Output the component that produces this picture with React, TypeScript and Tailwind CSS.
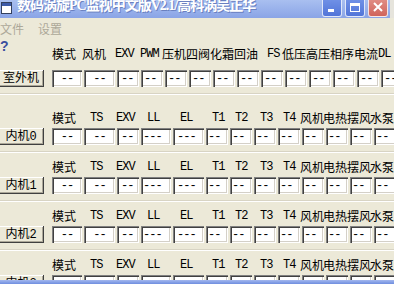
import React from 'react';

type Col = { label: string; w: string; lx: string; val: string; align: string };

const outCols: Col[] = [
  { label: '模式', w: 'w-[30px]', lx: 'ml-[0px]', val: '--', align: 'justify-center' },
  { label: '风机', w: 'w-[31px]', lx: '-ml-[2px]', val: '--', align: 'justify-center' },
  { label: 'EXV', w: 'w-[22px]', lx: '-ml-[2px]', val: '--', align: 'pl-[4px]' },
  { label: 'PWM', w: 'w-[22px]', lx: '-ml-[1px]', val: '--', align: 'pl-[3px]' },
  { label: '压机', w: 'w-[22px]', lx: '-ml-[3px]', val: '--', align: 'pl-[3px]' },
  { label: '四阀', w: 'w-[22px]', lx: '-ml-[3px]', val: '--', align: 'pl-[3px]' },
  { label: '化霜', w: 'w-[22px]', lx: '-ml-[3px]', val: '--', align: 'pl-[3px]' },
  { label: '回油', w: 'w-[22px]', lx: '-ml-[3px]', val: '--', align: 'pl-[3px]' },
  { label: 'FS', w: 'w-[22px]', lx: 'ml-[6px]', val: '--', align: 'pl-[3px]' },
  { label: '低压', w: 'w-[22px]', lx: '-ml-[3px]', val: '--', align: 'pl-[3px]' },
  { label: '高压', w: 'w-[22px]', lx: '-ml-[3px]', val: '--', align: 'pl-[3px]' },
  { label: '相序', w: 'w-[22px]', lx: '-ml-[3px]', val: '--', align: 'pl-[3px]' },
  { label: '电流', w: 'w-[22px]', lx: '-ml-[3px]', val: '--', align: 'pl-[3px]' },
  { label: 'DL', w: 'w-[22px]', lx: '-ml-[3px]', val: '--', align: 'pl-[3px]' },
];

const inCols: Col[] = [
  { label: '模式', w: 'w-[30px]', lx: 'ml-[0px]', val: '--', align: 'justify-center' },
  { label: 'TS', w: 'w-[31px]', lx: 'ml-[6px]', val: '--', align: 'justify-center' },
  { label: 'EXV', w: 'w-[22px]', lx: '-ml-[1px]', val: '--', align: 'pl-[4px]' },
  { label: 'LL', w: 'w-[30px]', lx: 'ml-[6px]', val: '---', align: 'pl-[2px]' },
  { label: 'EL', w: 'w-[31px]', lx: 'ml-[7px]', val: '---', align: 'pl-[4px]' },
  { label: 'T1', w: 'w-[22px]', lx: 'ml-[6px]', val: '--', align: 'pl-[2px]' },
  { label: 'T2', w: 'w-[22px]', lx: 'ml-[5px]', val: '--', align: 'pl-[2px]' },
  { label: 'T3', w: 'w-[22px]', lx: 'ml-[6px]', val: '--', align: 'pl-[2px]' },
  { label: 'T4', w: 'w-[22px]', lx: 'ml-[5px]', val: '--', align: 'pl-[2px]' },
  { label: '风机', w: 'w-[22px]', lx: '-ml-[2px]', val: '--', align: 'pl-[2px]' },
  { label: '电热', w: 'w-[22px]', lx: '-ml-[3px]', val: '--', align: 'pl-[2px]' },
  { label: '摆风', w: 'w-[22px]', lx: '-ml-[3px]', val: '--', align: 'pl-[2px]' },
  { label: '水泵', w: 'w-[22px]', lx: '-ml-[4px]', val: '--', align: 'pl-[2px]' },
];

const isLatin = (s: string) => /^[A-Z0-9]+$/.test(s);

const HeaderRow = ({ cols }: { cols: Col[] }) => (
  <div className="flex h-[14px]">
    <div className="w-[52px] shrink-0" />
    <div className="flex gap-[2px]">
      {cols.map((c) => (
        <div key={c.label} className={`${c.w} shrink-0 flex`}>
          <span
            className={`${c.lx} whitespace-nowrap leading-[14px] text-[12px] text-black ${
              isLatin(c.label) ? 'font-mono tracking-[-1px]' : ''
            }`}
          >
            {c.label}
          </span>
        </div>
      ))}
    </div>
  </div>
);

const Box = ({ c }: { c: Col }) => (
  <div
    className={`${c.w} ${c.align} shrink-0 h-[17px] bg-white flex items-center font-mono text-[12px] leading-[14px] text-black tracking-[-1px] shadow-[inset_1px_1px_0_#808080,inset_2px_2px_0_#404040,inset_-1px_-1px_0_#ffffff,inset_-2px_-2px_0_#d4d0c8]`}
  >
    {c.val}
  </div>
);

const DataRow = ({ name, cols }: { name: string; cols: Col[] }) => (
  <div className="flex h-[17px]">
    <button className="-ml-[2px] w-[46px] h-[17px] shrink-0 bg-[#ECE9D8] text-[12px] leading-[14px] text-black [font-family:'Liberation_Mono','Noto_Sans_CJK_SC',monospace] shadow-[inset_-1px_-1px_0_#404040,inset_1px_1px_0_#ffffff,inset_-2px_-2px_0_#aca899]">
      {name}
    </button>
    <div className="ml-[8px] flex gap-[2px]">
      {cols.map((c, i) => (
        <Box key={i} c={c} />
      ))}
    </div>
  </div>
);

const Separator = ({ h }: { h: string }) => (
  <div className={`${h} pt-[6px]`}>
    <div className="h-[2px] border-t border-t-[#d8d4c4] border-b border-b-white" />
  </div>
);

const TitleBar = () => (
  <div className="flex h-[18px] overflow-hidden">
    <div className="w-[390px] h-[18px] flex items-start bg-gradient-to-b from-[#a9bff0] to-[#8aa4e6]">
      <svg width="11" height="12" viewBox="0 0 11 12" className="mt-[2px] ml-[1px] shrink-0">
        <rect x="0.5" y="0.5" width="10" height="11" fill="#ffffff" stroke="#33405e" />
        <rect x="1" y="1" width="9" height="3" fill="#3c5aa8" />
      </svg>
      <span className="ml-[5px] -mt-[2px] text-[14px] leading-[16px] font-bold tracking-[-1px] text-white whitespace-nowrap [font-family:'Liberation_Serif','Noto_Sans_CJK_SC',serif] [text-shadow:1px_1px_0_#6a80c0]">
        数码涡旋PC监视中文版V2.1/高科涡吴正华
      </span>
      <div className="ml-auto mr-[2px] flex gap-[3px]">
        <div className="w-[20px] h-[17px] rounded-b-[3px] border border-t-0 border-white/80 bg-gradient-to-b from-[#6f90e6] to-[#5275d8] flex items-end px-[5px] pb-[4px]">
          <div className="w-[6px] h-[3px] bg-white" />
        </div>
        <div className="w-[20px] h-[17px] rounded-b-[3px] border border-t-0 border-white/80 bg-gradient-to-b from-[#6f90e6] to-[#5275d8] flex items-center justify-center">
          <div className="w-[10px] h-[9px] border border-white border-t-[3px] -mt-[2px]" />
        </div>
        <div className="w-[20px] h-[17px] rounded-b-[3px] border border-t-0 border-white/80 bg-gradient-to-b from-[#e08c84] to-[#d0645c] flex items-center justify-center">
          <svg width="10" height="10" viewBox="0 0 10 10" className="-mt-[2px]">
            <path d="M1 1 L9 9 M9 1 L1 9" stroke="#ffffff" strokeWidth="2" />
          </svg>
        </div>
      </div>
    </div>
    <div className="flex-1 bg-[#e6e4dc]" />
  </div>
);

export default function App() {
  return (
    <div className="w-[394px] h-[284px] overflow-hidden bg-[#ECE9D8] [font-family:'Noto_Sans_CJK_SC',sans-serif]">
      <div className="h-[280px] overflow-hidden">
        <TitleBar />
        <div className="h-[20px] flex items-start pt-[4px] text-[12px] leading-[14px] text-[#aca899]">
          <span>文件</span>
          <span className="ml-[14px]">设置</span>
        </div>
        <div className="h-[32px] flex">
          <div className="w-0 overflow-visible pt-[1px] text-[14px] leading-[14px] font-bold text-[#3b4f9e] [font-family:'Liberation_Sans',sans-serif]">
            ?
          </div>
          <div className="pt-[9px]">
            <HeaderRow cols={outCols} />
          </div>
        </div>
        <DataRow name="室外机" cols={outCols} />
        <Separator h="h-[24px]" />
        {[0, 1, 2, 3].map((n) => (
          <div key={n}>
            <HeaderRow cols={inCols} />
            <div className="h-[3px]" />
            <DataRow name={`内机${n}`} cols={inCols} />
            <Separator h="h-[15px]" />
          </div>
        ))}
      </div>
      <div className="h-[4px] bg-gradient-to-b from-[#a4b8ee] to-[#6f8edf]" />
    </div>
  );
}
